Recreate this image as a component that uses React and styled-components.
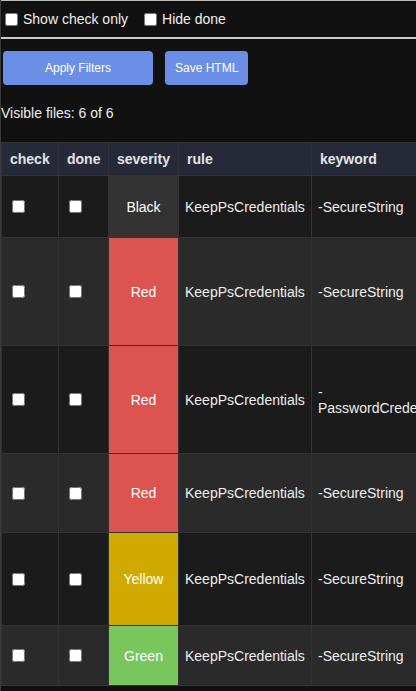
import React from "react";
import styled, { createGlobalStyle } from "styled-components";

const Global = createGlobalStyle`
  html, body { margin: 0; padding: 0; background: #111; }
  body { font-family: "Liberation Sans", Arial, sans-serif; color: #eee; }
`;

const Page = styled.div`
  border-left: 1px solid #3a3a3a;
  overflow: hidden;
  min-height: 691px;
  box-sizing: border-box;
  background: #111;
`;

const Toolbar = styled.div`
  display: flex;
  align-items: center;
  height: 36px;
  border-top: 1px solid #bbb;
  border-bottom: 2px solid #ccc;
`;

const Label = styled.label`
  display: flex;
  align-items: center;
  font-size: 14px;
  color: #eee;
  margin-right: 12px;
  input { margin: 1px 5px 0 4px; width: 13px; height: 13px; }
`;

const Actions = styled.div`
  display: flex;
  gap: 12px;
  padding: 12px 0 0 2px;
`;

const Button = styled.button`
  font-family: "Liberation Sans", Arial, sans-serif;
  font-size: 12px;
  line-height: 14px;
  color: #fff;
  background: #6b8fe6;
  border: none;
  border-radius: 4px;
  padding: 10px 10px;
  width: ${(p) => (p.$wide ? "150px" : "auto")};
`;

const Status = styled.div`
  font-size: 14px;
  line-height: 16px;
  margin: 20px 0 21px 0;
`;

const Table = styled.table`
  border-collapse: collapse;
  table-layout: fixed;
  width: 450px;
  font-size: 14px;
`;

const Th = styled.th`
  background: #262a38;
  color: #e4e4e4;
  font-weight: bold;
  text-align: left;
  padding: 8px;
  border: 1px solid #333;
  line-height: 16px;
  white-space: nowrap;
`;

const Tr = styled.tr`
  background: ${(p) => (p.$odd ? "#1b1b1b" : "#2a2a2a")};
  td { height: ${(p) => p.$h}px; }
`;

const Td = styled.td`
  padding: 6px;
  border: 1px solid #333;
  vertical-align: middle;
  color: #eee;
  line-height: 16px;
  box-sizing: border-box;
  input { margin: 3px 3px 3px 4px; width: 13px; height: 13px; display: block; }
`;

const sevColors = {
  Black: "#333333",
  Red: "#db5450",
  Yellow: "#d0aa00",
  Green: "#78c65c",
};

const SevTd = styled(Td)`
  background: ${(p) => sevColors[p.$sev]};
  text-align: center;
  color: #fff;
`;

const rows = [
  { sev: "Black", kw: "-SecureString", h: 62 },
  { sev: "Red", kw: "-SecureString", h: 108 },
  { sev: "Red", kw: "-PasswordCredential", h: 108, wrap: true },
  { sev: "Red", kw: "-SecureString", h: 79 },
  { sev: "Yellow", kw: "-SecureString", h: 93 },
  { sev: "Green", kw: "-SecureString", h: 60 },
];

function Keyword({ text, wrap }) {
  if (!wrap) return text;
  return (
    <>
      {text.slice(0, 1)}
      <wbr />
      {text.slice(1)}
    </>
  );
}

export default function App() {
  return (
    <Page>
      <Global />
      <Toolbar>
        <Label>
          <input type="checkbox" />
          Show check only
        </Label>
        <Label>
          <input type="checkbox" />
          Hide done
        </Label>
      </Toolbar>
      <Actions>
        <Button $wide>Apply Filters</Button>
        <Button>Save HTML</Button>
      </Actions>
      <Status>Visible files: 6 of 6</Status>
      <Table>
        <colgroup>
          <col style={{ width: 57 }} />
          <col style={{ width: 50 }} />
          <col style={{ width: 70 }} />
          <col style={{ width: 133 }} />
          <col style={{ width: 140 }} />
        </colgroup>
        <thead>
          <tr>
            <Th>check</Th>
            <Th>done</Th>
            <Th>severity</Th>
            <Th>rule</Th>
            <Th>keyword</Th>
          </tr>
        </thead>
        <tbody>
          {rows.map((r, i) => (
            <Tr key={i} $odd={i % 2 === 0} $h={r.h}>
              <Td>
                <input type="checkbox" />
              </Td>
              <Td>
                <input type="checkbox" />
              </Td>
              <SevTd $sev={r.sev}>{r.sev}</SevTd>
              <Td>KeepPsCredentials</Td>
              <Td>
                <Keyword text={r.kw} wrap={r.wrap} />
              </Td>
            </Tr>
          ))}
        </tbody>
      </Table>
    </Page>
  );
}
